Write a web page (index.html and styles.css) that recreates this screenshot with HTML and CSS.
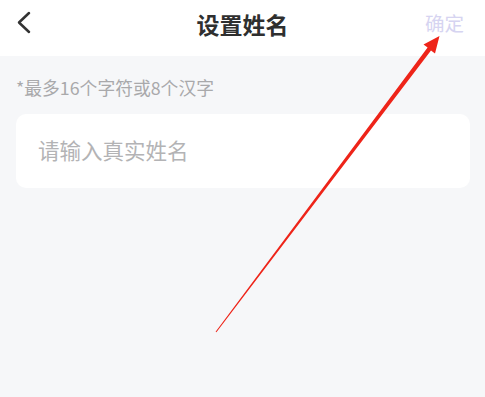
FILE: index.html
```html
<!DOCTYPE html>
<html lang="zh">
<head>
<meta charset="utf-8">
<link rel="stylesheet" href="styles.css">
</head>
<body>
<div class="page">
  <header class="nav">
    <div class="nav-left">
      <svg class="back" width="14" height="24" viewBox="0 0 14 24"><polyline points="12,2 2,11.5 12,21" fill="none" stroke="#333" stroke-width="2.5" stroke-linecap="round" stroke-linejoin="round"/></svg>
    </div>
    <div class="nav-title">设置姓名</div>
    <div class="nav-right"><span class="confirm">确定</span></div>
  </header>
  <main class="content">
    <p class="hint">*最多16个字符或8个汉字</p>
    <div class="card"><span class="placeholder">请输入真实姓名</span></div>
  </main>
  <svg class="arrow" width="485" height="397" viewBox="0 0 485 397">
    <polygon points="439.5,36 435,53.5 431,50.5 216.4,332.3 215.6,331.7 427.6,47.4 423.5,44.6" fill="#ee2419"/>
  </svg>
</div>
</body>
</html>
```
FILE: styles.css
```css
html, body {
  margin: 0;
  padding: 0;
}
body {
  font-family: "Noto Sans CJK SC", "Noto Sans", sans-serif;
  background: #f6f7f9;
}
.page {
  position: relative;
  width: 485px;
  height: 397px;
  overflow: hidden;
  display: flex;
  flex-direction: column;
}
.nav {
  height: 56px;
  flex: none;
  background: #ffffff;
  display: grid;
  grid-template-columns: 1fr auto 1fr;
  align-items: center;
}
.nav-left {
  padding-left: 17px;
  display: flex;
  align-items: center;
  padding-bottom: 11px;
}
.back {
  display: block;
}
.nav-title {
  font-size: 23px;
  font-weight: 700;
  color: #2f2f2f;
  line-height: 30px;
  padding-bottom: 8px;
}
.nav-right {
  display: flex;
  justify-content: flex-end;
  padding-right: 21px;
  padding-bottom: 10px;
}
.confirm {
  font-size: 19.5px;
  line-height: 26px;
  color: #d6d4f1;
}
.content {
  flex: 1;
  padding: 19px 15px 0 16px;
}
.hint {
  margin: 0;
  font-size: 17.8px;
  line-height: 24px;
  color: #a9a9ab;
}
.card {
  margin-top: 15px;
  height: 74px;
  background: #ffffff;
  border-radius: 10px;
  display: flex;
  align-items: center;
  padding-left: 22px;
}
.placeholder {
  font-size: 21.5px;
  color: #b3b3b5;
  line-height: 30px;
  padding-bottom: 3px;
}
.arrow {
  position: absolute;
  left: 0;
  top: 0;
  pointer-events: none;
}
```
